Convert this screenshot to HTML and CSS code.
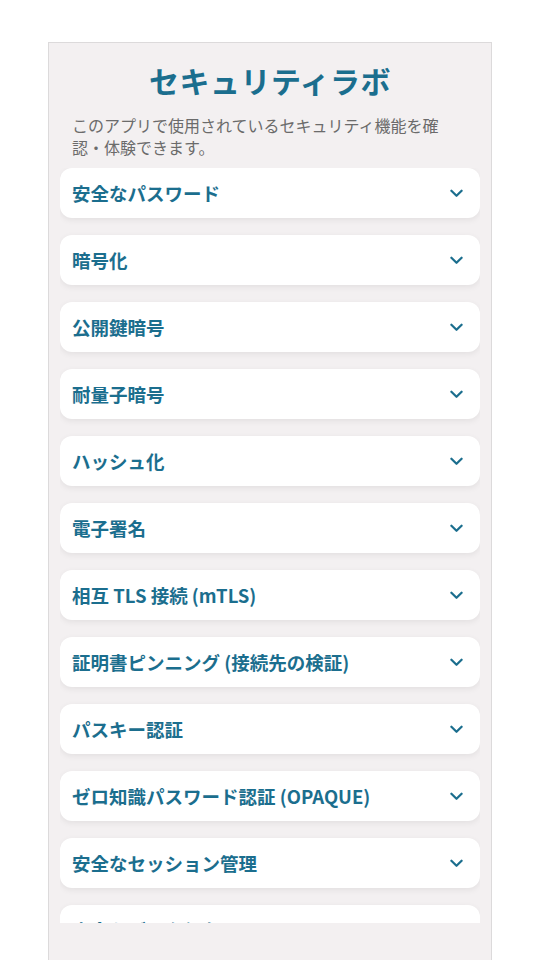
FILE: index.html
```html
<!DOCTYPE html>
<html lang="ja">
<head>
<meta charset="utf-8">
<link rel="stylesheet" href="styles.css">
</head>
<body>
<div class="app">
  <h1 class="title">セキュリティラボ</h1>
  <p class="lead">このアプリで使用されているセキュリティ機能を確認・体験できます。</p>
  <div class="list">
    <div class="item"><span>安全なパスワード</span><svg class="chev" viewBox="0 0 14 9"><path d="M1.5 1.5 L7 7 L12.5 1.5"/></svg></div>
    <div class="item"><span>暗号化</span><svg class="chev" viewBox="0 0 14 9"><path d="M1.5 1.5 L7 7 L12.5 1.5"/></svg></div>
    <div class="item"><span>公開鍵暗号</span><svg class="chev" viewBox="0 0 14 9"><path d="M1.5 1.5 L7 7 L12.5 1.5"/></svg></div>
    <div class="item"><span>耐量子暗号</span><svg class="chev" viewBox="0 0 14 9"><path d="M1.5 1.5 L7 7 L12.5 1.5"/></svg></div>
    <div class="item"><span>ハッシュ化</span><svg class="chev" viewBox="0 0 14 9"><path d="M1.5 1.5 L7 7 L12.5 1.5"/></svg></div>
    <div class="item"><span>電子署名</span><svg class="chev" viewBox="0 0 14 9"><path d="M1.5 1.5 L7 7 L12.5 1.5"/></svg></div>
    <div class="item"><span>相互 TLS 接続 (mTLS)</span><svg class="chev" viewBox="0 0 14 9"><path d="M1.5 1.5 L7 7 L12.5 1.5"/></svg></div>
    <div class="item"><span>証明書ピンニング (接続先の検証)</span><svg class="chev" viewBox="0 0 14 9"><path d="M1.5 1.5 L7 7 L12.5 1.5"/></svg></div>
    <div class="item"><span>パスキー認証</span><svg class="chev" viewBox="0 0 14 9"><path d="M1.5 1.5 L7 7 L12.5 1.5"/></svg></div>
    <div class="item"><span>ゼロ知識パスワード認証 (OPAQUE)</span><svg class="chev" viewBox="0 0 14 9"><path d="M1.5 1.5 L7 7 L12.5 1.5"/></svg></div>
    <div class="item"><span>安全なセッション管理</span><svg class="chev" viewBox="0 0 14 9"><path d="M1.5 1.5 L7 7 L12.5 1.5"/></svg></div>
    <div class="item"><span>安全なデータ保存</span><svg class="chev" viewBox="0 0 14 9"><path d="M1.5 1.5 L7 7 L12.5 1.5"/></svg></div>
  </div>
</div>
</body>
</html>
```
FILE: styles.css
```css
html, body {
  margin: 0;
  padding: 0;
  background: #ffffff;
  height: 100%;
}
body {
  font-family: "Noto Sans CJK JP", "Noto Sans", sans-serif;
  padding-top: 42px;
  box-sizing: border-box;
}
.app {
  margin: 0 48px;
  height: 918px;
  background: #f3f0f1;
  border: 1px solid #dcdadb;
  border-bottom: none;
  box-sizing: border-box;
  padding: 0 11px;
}
.title {
  margin: 17px 0 0;
  text-align: center;
  font-size: 30px;
  line-height: 40px;
  font-weight: 700;
  color: #1b6e8e;
  letter-spacing: 0.5px;
}
.lead {
  margin: 14px 36px 0 12px;
  font-size: 16px;
  line-height: 22px;
  color: #6b6b6b;
}
.list {
  margin-top: 10px;
  height: 755px;
  overflow: hidden;
  display: flex;
  flex-direction: column;
  gap: 17px;
}
.item {
  flex: none;
  height: 50px;
  background: #ffffff;
  border-radius: 12px;
  box-shadow: 0 2px 6px rgba(0, 0, 0, 0.07);
  display: flex;
  align-items: center;
  justify-content: space-between;
  padding: 0 17px 0 12px;
  box-sizing: border-box;
  font-size: 18.5px;
  font-weight: 700;
  color: #1b6e8e;
}
.chev {
  width: 13px;
  height: 9px;
  fill: none;
  stroke: #1b6e8e;
  stroke-width: 2.4;
  stroke-linecap: round;
  stroke-linejoin: round;
}
```
